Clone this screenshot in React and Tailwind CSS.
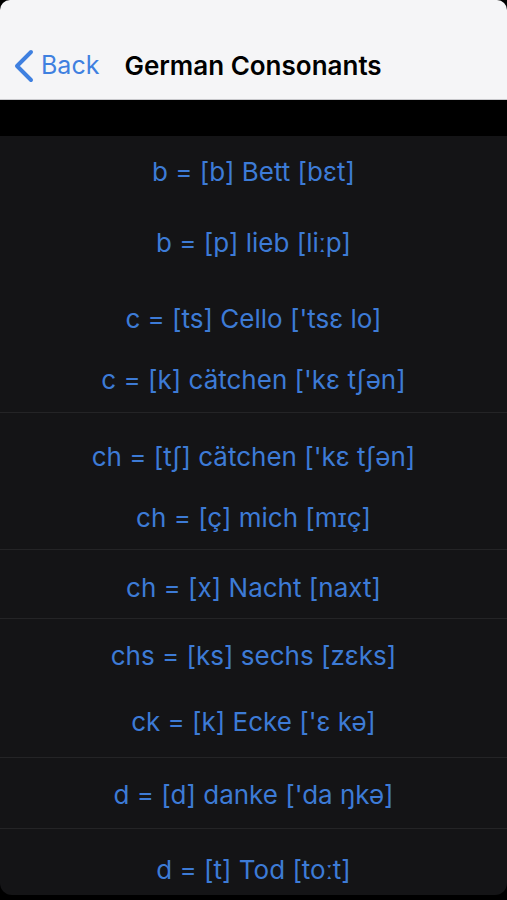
import React from "react";

// h: row height, mt: top margin of each 30px line, line: visible top border
const rows = [
  { h: 70, mt: [21], lines: ["b = [b] Bett [bɛt]"] },
  { h: 69, mt: [22], lines: ["b = [p] lieb [liːp]"] },
  {
    h: 137,
    mt: [29, 31],
    lines: ["c = [ts] Cello ['tsɛ lo]", "c = [k] cätchen ['kɛ tʃən]"],
  },
  {
    h: 137,
    mt: [30, 31],
    line: true,
    lines: ["ch = [tʃ] cätchen ['kɛ tʃən]", "ch = [ç] mich [mɪç]"],
  },
  { h: 69, mt: [24], line: true, lines: ["ch = [x] Nacht [naxt]"] },
  {
    h: 139,
    mt: [23, 36],
    line: true,
    lines: ["chs = [ks] sechs [zɛks]", "ck = [k] Ecke ['ɛ kə]"],
  },
  { h: 71, mt: [23], line: true, lines: ["d = [d] danke ['da ŋkə]"] },
  { h: 67, mt: [27], line: true, lines: ["d = [t] Tod [toːt]"] },
];

const Row = ({ row }) => (
  <div
    className={"flex flex-col " + (row.line ? "border-t border-[#242426]" : "")}
    style={{ height: row.h }}
  >
    {row.lines.map((t, i) => (
      <div
        key={i}
        className="h-[30px] leading-[30px] text-center text-[26px] text-[#3d7bd6] whitespace-nowrap"
        style={{ marginTop: row.mt[i] - (row.line && i === 0 ? 1 : 0) }}
      >
        {t}
      </div>
    ))}
  </div>
);

export default function App() {
  return (
    <div
      className="w-[507px] h-[900px] bg-black flex flex-col overflow-hidden"
      style={{ fontFamily: "Inter, 'Liberation Sans', sans-serif" }}
    >
      <div className="h-[100px] bg-[#f5f5f7] rounded-t-[10px] border-b border-[#c8c8cc] flex items-center pt-[32px]">
        <svg width="24" height="34" viewBox="0 0 24 34" className="ml-[12px]">
          <polyline
            points="19,3 5,17 19,31"
            fill="none"
            stroke="#3f80e0"
            strokeWidth="4"
            strokeLinecap="round"
            strokeLinejoin="round"
          />
        </svg>
        <span className="ml-[5px] text-[25px] text-[#3f80e0]">Back</span>
        <span className="ml-[25px] text-[26px] font-semibold text-black">
          German Consonants
        </span>
      </div>
      <div className="h-[36px]" />
      <div className="bg-[#141416] rounded-b-[12px] flex flex-col">
        {rows.map((r, i) => (
          <Row key={i} row={r} />
        ))}
      </div>
    </div>
  );
}
